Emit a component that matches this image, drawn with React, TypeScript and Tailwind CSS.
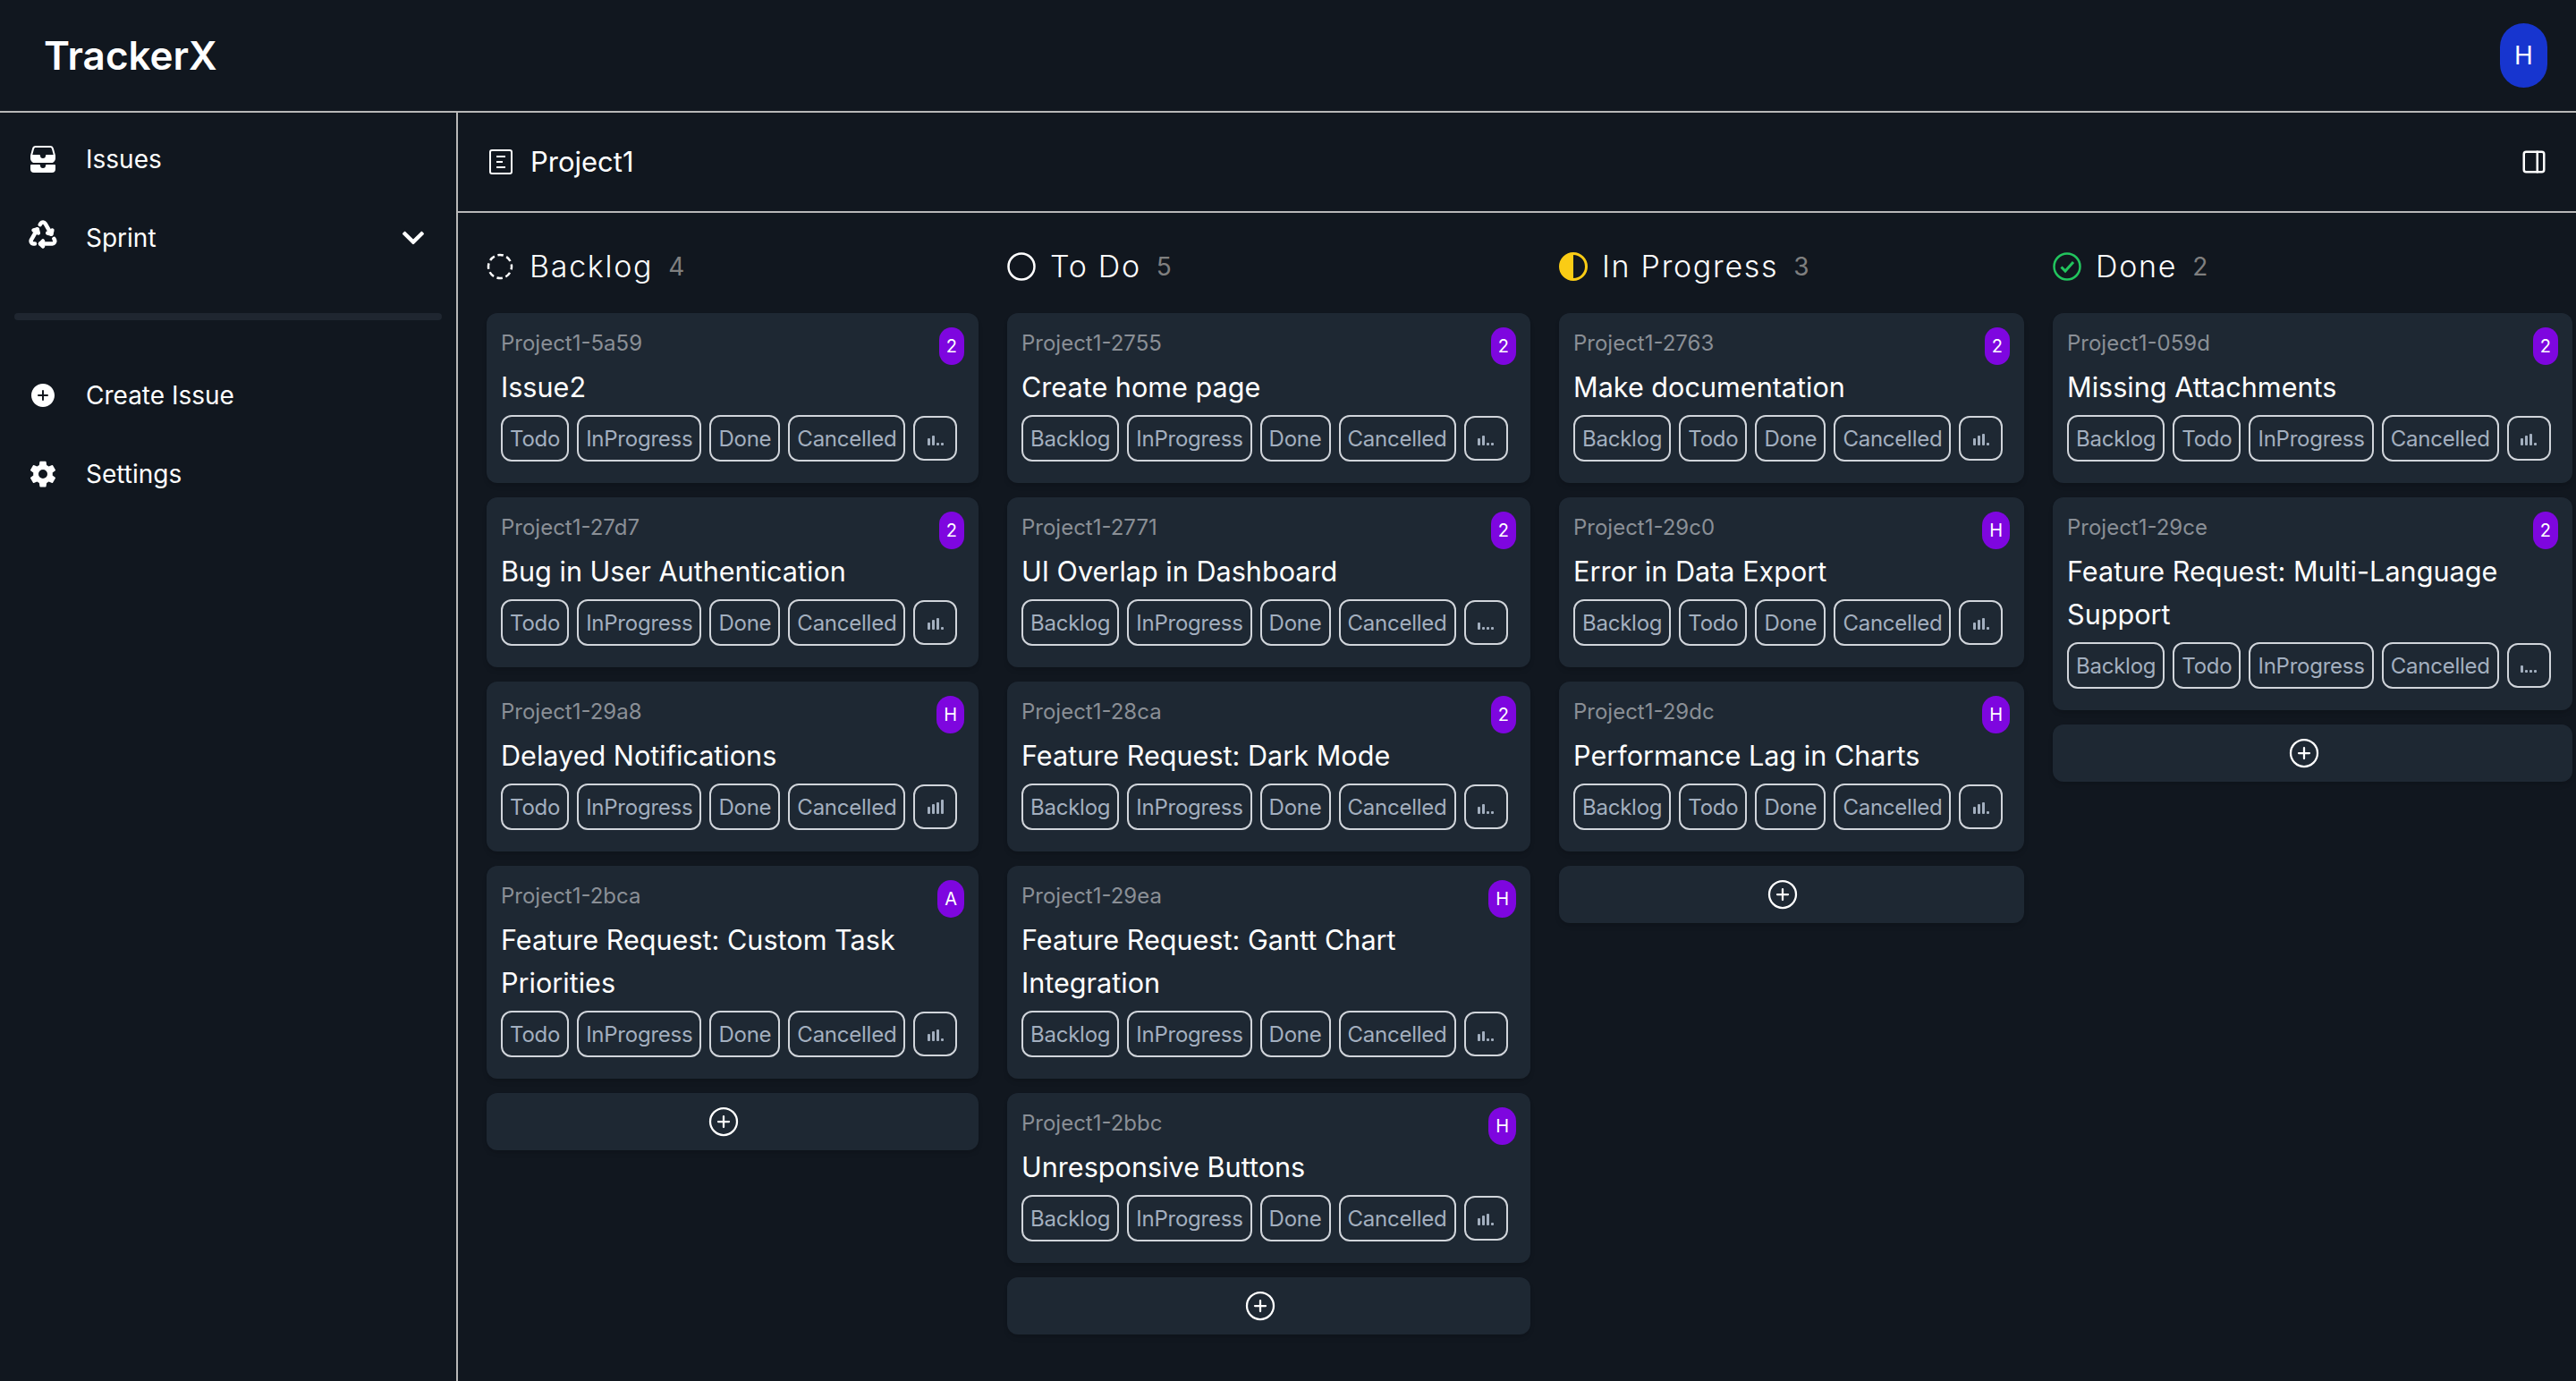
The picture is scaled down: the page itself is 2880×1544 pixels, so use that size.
import React from "react";
import { FaChevronDown } from "react-icons/fa";
import { TbRecycle } from "react-icons/tb";
import { IoFileTrayStacked, IoAddCircle, IoSettingsSharp } from "react-icons/io5";
import { CirclePlus, PanelRight } from "lucide-react";

type Issue = { id: string; title: string; badge: string; level: number };
type Column = { name: string; count: number; width: string; icon: React.ReactNode; tags: string[]; issues: Issue[] };

function ProjectIcon() {
  return (
    <svg width="26" height="28" viewBox="0 0 26 28" fill="none" stroke="white" strokeWidth="2">
      <rect x="1" y="1" width="24" height="26" rx="2" />
      <path d="M8 8h10M8 14h7M8 20h10" />
    </svg>
  );
}

function Dashed() {
  return (
    <svg width="30" height="30" viewBox="0 0 30 30" fill="none">
      <circle cx="15" cy="15" r="13" stroke="white" strokeWidth="2.5" strokeDasharray="6.5 3.7" strokeDashoffset="3" />
    </svg>
  );
}
function Empty() {
  return (
    <svg width="32" height="32" viewBox="0 0 32 32" fill="none">
      <circle cx="16" cy="16" r="14.5" stroke="white" strokeWidth="2.5" />
    </svg>
  );
}
function Half() {
  return (
    <svg width="32" height="32" viewBox="0 0 32 32" fill="none">
      <circle cx="16" cy="16" r="14.5" stroke="#facc15" strokeWidth="3" />
      <path d="M16 2a14 14 0 0 0 0 28z" fill="#facc15" />
    </svg>
  );
}
function Check() {
  return (
    <svg width="32" height="32" viewBox="0 0 32 32" fill="none" stroke="#22c55e" strokeWidth="2.5">
      <circle cx="16" cy="16" r="14.5" />
      <path d="M9.5 16.5l4.5 4.5 9-10" strokeWidth="3" />
    </svg>
  );
}

function Signal({ level }: { level: number }) {
  const heights = [8, 11, 13, 16];
  return (
    <svg width="18" height="16" viewBox="0 0 18 16" fill="#a3afbf">
      {heights.map((h, i) => {
        const v = i < level ? h : 3;
        return <rect key={i} x={i * 5} y={16 - v} width="3" height={v} rx="1" />;
      })}
    </svg>
  );
}

const columns: Column[] = [
  {
    name: "Backlog", count: 4, width: "w-[550px]", icon: <Dashed />, tags: ["Todo", "InProgress", "Done", "Cancelled"],
    issues: [
      { id: "Project1-5a59", title: "Issue2", badge: "2", level: 2 },
      { id: "Project1-27d7", title: "Bug in User Authentication", badge: "2", level: 3 },
      { id: "Project1-29a8", title: "Delayed Notifications", badge: "H", level: 4 },
      { id: "Project1-2bca", title: "Feature Request: Custom Task Priorities", badge: "A", level: 3 },
    ],
  },
  {
    name: "To Do", count: 5, width: "w-[585px]", icon: <Empty />, tags: ["Backlog", "InProgress", "Done", "Cancelled"],
    issues: [
      { id: "Project1-2755", title: "Create home page", badge: "2", level: 2 },
      { id: "Project1-2771", title: "UI Overlap in Dashboard", badge: "2", level: 1 },
      { id: "Project1-28ca", title: "Feature Request: Dark Mode", badge: "2", level: 2 },
      { id: "Project1-29ea", title: "Feature Request: Gantt Chart Integration", badge: "H", level: 2 },
      { id: "Project1-2bbc", title: "Unresponsive Buttons", badge: "H", level: 3 },
    ],
  },
  {
    name: "In Progress", count: 3, width: "w-[520px]", icon: <Half />, tags: ["Backlog", "Todo", "Done", "Cancelled"],
    issues: [
      { id: "Project1-2763", title: "Make documentation", badge: "2", level: 3 },
      { id: "Project1-29c0", title: "Error in Data Export", badge: "H", level: 3 },
      { id: "Project1-29dc", title: "Performance Lag in Charts", badge: "H", level: 3 },
    ],
  },
  {
    name: "Done", count: 2, width: "w-[581px]", icon: <Check />, tags: ["Backlog", "Todo", "InProgress", "Cancelled"],
    issues: [
      { id: "Project1-059d", title: "Missing Attachments", badge: "2", level: 3 },
      { id: "Project1-29ce", title: "Feature Request: Multi-Language Support", badge: "2", level: 1 },
    ],
  },
];

function Card({ issue, tags }: { issue: Issue; tags: string[] }) {
  return (
    <div className="rounded-xl bg-[#1e2833] shadow-md px-4 pt-4 pb-6">
      <div className="flex items-start justify-between">
        <span className="text-[24px] leading-9 text-[#8a8f96]">{issue.id}</span>
        <span className="flex h-[42px] items-center rounded-full bg-[#7e06df] px-2 text-[20px] text-white">{issue.badge}</span>
      </div>
      <div className="pt-px text-[30.6px] leading-[48px] text-white">{issue.title}</div>
      <div className="mt-[7px] flex items-start gap-[9px]">
        {tags.map((t) => (
          <span key={t} className="flex h-[52px] items-center rounded-xl border-2 border-[#d1d5db] px-2 pt-px text-[24px] tracking-[-0.01em] text-[#a3afbf]">
            {t}
          </span>
        ))}
        <span className="mt-px flex h-[50px] w-[49px] items-end justify-center rounded-xl border-2 border-[#d1d5db] pb-[15px]">
          <Signal level={issue.level} />
        </span>
      </div>
    </div>
  );
}

function NavItem({ icon, label, chevron }: { icon: React.ReactNode; label: string; chevron?: boolean }) {
  return (
    <div className="flex h-[88px] items-center pl-8 pr-[34px] text-white">
      <span className="flex w-8 justify-center">{icon}</span>
      <span className="ml-8 flex-1 text-[28px]">{label}</span>
      {chevron && <FaChevronDown size={28} color="white" />}
    </div>
  );
}

export default function App() {
  return (
    <div className="flex h-screen flex-col overflow-hidden bg-[#11171f] font-['Inter',sans-serif] text-white [font-optical-sizing:none]">
      <header className="flex h-[126px] shrink-0 items-center justify-between border-b-2 border-[#b8b8b8] pl-[49px] pr-8">
        <span className="text-[44px] font-semibold leading-none">TrackerX</span>
        <span className="flex h-[72px] w-[53px] items-center justify-center rounded-full bg-[#1735cf] text-[28px] text-white">H</span>
      </header>
      <div className="flex min-h-0 flex-1">
        <aside className="w-[512px] shrink-0 border-r-2 border-[#b8b8b8] pt-2">
          <NavItem icon={<IoFileTrayStacked size={36} />} label="Issues" />
          <NavItem icon={<span className="-mt-2 block"><TbRecycle size={36} strokeWidth={3} /></span>} label="Sprint" chevron />
          <div className="mx-4 mb-10 mt-10 h-2 rounded-full bg-[#1f2630]" />
          <NavItem icon={<IoAddCircle size={34} />} label="Create Issue" />
          <NavItem icon={<IoSettingsSharp size={32} />} label="Settings" />
        </aside>
        <main className="min-w-0 flex-1 overflow-hidden">
          <div className="flex h-[112px] items-center justify-between border-b-2 border-[#b8b8b8] pl-[35px] pr-[32px]">
            <div className="flex items-center gap-5">
              <ProjectIcon />
              <span className="pt-px text-[31px]">Project1</span>
            </div>
            <PanelRight size={30} color="white" strokeWidth={2} />
          </div>
          <div className="flex gap-8 pl-8 pt-[40px]">
            {columns.map((c) => (
              <section key={c.name} className={`${c.width} shrink-0`}>
                <div className="flex h-[72px] items-start">
                  <span className="flex h-10 w-[36px] items-center">{c.icon}</span>
                  <span className="ml-[12px] text-[34px] font-light leading-10 tracking-wider">{c.name}</span>
                  <span className="ml-[17px] text-[28px] leading-10 text-[#7f7f7f]">{c.count}</span>
                </div>
                <div className="flex flex-col gap-4">
                  {c.issues.map((i) => (
                    <Card key={i.id} issue={i} tags={c.tags} />
                  ))}
                  <div className="flex h-16 items-center justify-center rounded-xl bg-[#1e2833] pr-5 shadow-md">
                    <CirclePlus size={36} color="white" strokeWidth={1.5} />
                  </div>
                </div>
              </section>
            ))}
          </div>
        </main>
      </div>
    </div>
  );
}
